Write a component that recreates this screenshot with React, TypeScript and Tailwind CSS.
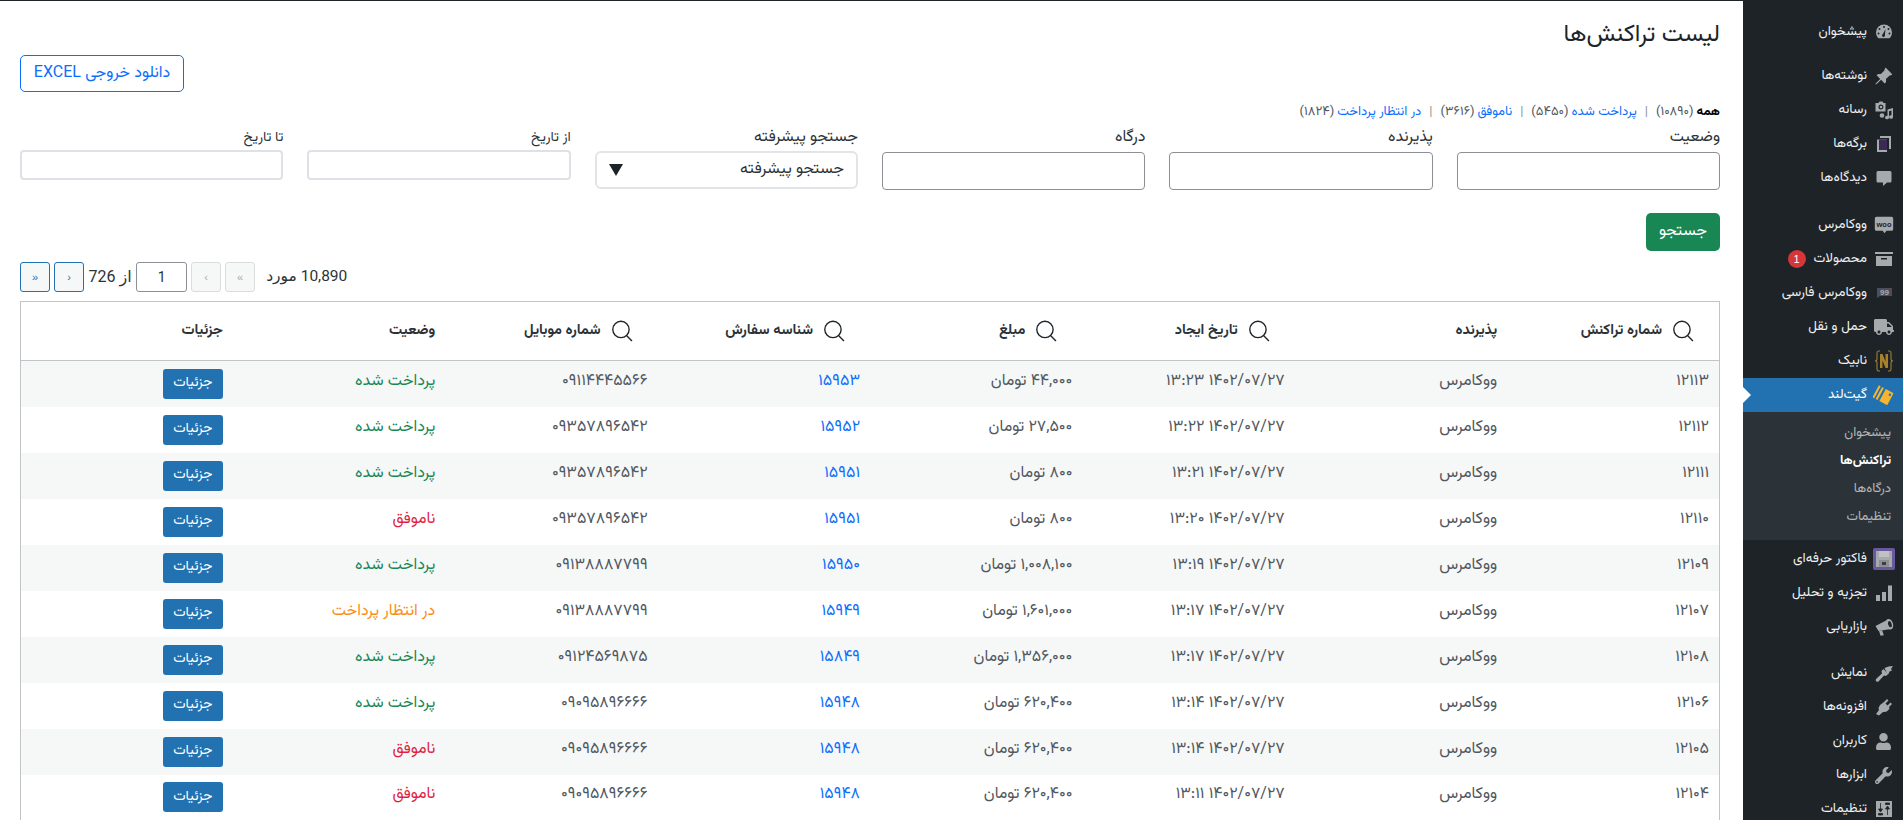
import { BsPinAngleFill } from 'react-icons/bs'
import { FaTruck, FaUser, FaWrench } from 'react-icons/fa'

const font = "font-['Vazirmatn','DejaVu_Sans','Noto_Sans',sans-serif]"

type Status = 'paid' | 'failed' | 'pending'
interface Row { id: string; time: string; amount: string; order: string; mobile: string; status: Status }

const rows: Row[] = [
  { id: '۱۲۱۱۳', time: '۱۳:۲۳', amount: '۴۴,۰۰۰', order: '۱۵۹۵۳', mobile: '۰۹۱۱۴۴۴۵۵۶۶', status: 'paid' },
  { id: '۱۲۱۱۲', time: '۱۳:۲۲', amount: '۲۷,۵۰۰', order: '۱۵۹۵۲', mobile: '۰۹۳۵۷۸۹۶۵۴۲', status: 'paid' },
  { id: '۱۲۱۱۱', time: '۱۳:۲۱', amount: '۸۰۰', order: '۱۵۹۵۱', mobile: '۰۹۳۵۷۸۹۶۵۴۲', status: 'paid' },
  { id: '۱۲۱۱۰', time: '۱۳:۲۰', amount: '۸۰۰', order: '۱۵۹۵۱', mobile: '۰۹۳۵۷۸۹۶۵۴۲', status: 'failed' },
  { id: '۱۲۱۰۹', time: '۱۳:۱۹', amount: '۱,۰۰۸,۱۰۰', order: '۱۵۹۵۰', mobile: '۰۹۱۳۸۸۸۷۷۹۹', status: 'paid' },
  { id: '۱۲۱۰۷', time: '۱۳:۱۷', amount: '۱,۶۰۱,۰۰۰', order: '۱۵۹۴۹', mobile: '۰۹۱۳۸۸۸۷۷۹۹', status: 'pending' },
  { id: '۱۲۱۰۸', time: '۱۳:۱۷', amount: '۱,۳۵۶,۰۰۰', order: '۱۵۸۴۹', mobile: '۰۹۱۲۴۵۶۹۸۷۵', status: 'paid' },
  { id: '۱۲۱۰۶', time: '۱۳:۱۴', amount: '۶۲۰,۴۰۰', order: '۱۵۹۴۸', mobile: '۰۹۰۹۵۸۹۶۶۶۶', status: 'paid' },
  { id: '۱۲۱۰۵', time: '۱۳:۱۴', amount: '۶۲۰,۴۰۰', order: '۱۵۹۴۸', mobile: '۰۹۰۹۵۸۹۶۶۶۶', status: 'failed' },
  { id: '۱۲۱۰۴', time: '۱۳:۱۱', amount: '۶۲۰,۴۰۰', order: '۱۵۹۴۸', mobile: '۰۹۰۹۵۸۹۶۶۶۶', status: 'failed' },
]

const statusLabel: Record<Status, string> = { paid: 'پرداخت شده', failed: 'ناموفق', pending: 'در انتظار پرداخت' }
const statusClass: Record<Status, string> = { paid: 'text-[#198754]', failed: 'text-[#e01e42]', pending: 'text-[#fd8c14]' }

const columns = [
  { title: 'شماره تراکنش', search: true },
  { title: 'پذیرنده', search: false },
  { title: 'تاریخ ایجاد', search: true },
  { title: 'مبلغ', search: true },
  { title: 'شناسه سفارش', search: true },
  { title: 'شماره موبایل', search: true },
  { title: 'وضعیت', search: false },
  { title: 'جزئیات', search: false },
]

function SearchIcon() {
  return (
    <svg viewBox="0 0 21 21" className="w-[22px] h-[22px] shrink-0" fill="none" stroke="#1d2327" strokeWidth="1.3">
      <circle cx="9.5" cy="9" r="7.8" />
      <path d="M15 15l5 5" />
    </svg>
  )
}

const I = ({ children }: { children: React.ReactNode }) => (
  <svg viewBox="0 0 20 20" className="w-5 h-5" fill="#a7aaad">{children}</svg>
)

const icons = {
  dashboard: (
    <I>
      <path fillRule="evenodd" d="M10 2.5a8 8 0 0 1 8 8c0 2.4-1 4.4-2.6 5.8H4.6C3 14.9 2 12.9 2 10.5a8 8 0 0 1 8-8zM10 4a1 1 0 1 0 0 2 1 1 0 0 0 0-2zM5.5 6a1 1 0 1 0 0 2 1 1 0 0 0 0-2zM14.5 6a1 1 0 1 0 0 2 1 1 0 0 0 0-2zM4.5 10.5a1 1 0 1 0 0 2 1 1 0 0 0 0-2zM15.5 10.5a1 1 0 1 0 0 2 1 1 0 0 0 0-2zM11.5 7l-2.6 5a1.5 1.5 0 1 0 2 .8z" />
    </I>
  ),
  media: (
    <I>
      <path fillRule="evenodd" d="M1.5 3h3l1-1.5h3l1 1.5h2v8.5H1.5zM7 4.5a2.5 2.5 0 1 0 0 5 2.5 2.5 0 0 0 0-5z" />
      <circle cx="7" cy="7" r="1.3" />
      <path d="M13.5 9.5l5.5-1.5v9a2 1.8 0 1 1-1.5-1.7V10.5l-2.5.7v6.3a2 1.8 0 1 1-1.5-1.7z" />
      <circle cx="8" cy="15.5" r="2.3" />
    </I>
  ),
  pages: (
    <I>
      <path d="M6 2h11v13h-2V4H6z" />
      <path d="M3 5.5h10V18H3z" />
      <path d="M5 5.5h8V16H5z" fill="#3b2a55" />
    </I>
  ),
  comments: <I><path d="M4 3h12a1.5 1.5 0 0 1 1.5 1.5v8.5A1.5 1.5 0 0 1 16 14.5h-3l-4 3.5v-3.5H4A1.5 1.5 0 0 1 2.5 13V4.5A1.5 1.5 0 0 1 4 3z" /></I>,
  woo: (
    <svg viewBox="0 0 24 24" className="w-[20px] h-[20px]">
      <path d="M3 2h18a2 2 0 0 1 2 2v13a2 2 0 0 1-2 2h-6l-2.5 3-2-3H3a2 2 0 0 1-2-2V4a2 2 0 0 1 2-2z" fill="#a7aaad" />
      <text x="12" y="14" textAnchor="middle" fontSize="9" fontWeight="700" fill="#1d2327" fontFamily="Liberation Sans, sans-serif">woo</text>
    </svg>
  ),
  archive: (
    <I>
      <path d="M1 3h18v2H1z" />
      <path fillRule="evenodd" d="M2 7h16v10H2zM7 9v1.5h6V9z" />
    </I>
  ),
  persian: (
    <svg viewBox="0 0 20 20" className="w-5 h-5">
      <path d="M3 5h15v8H6l-3 2z" fill="#4b4f5c" />
      <text x="10.5" y="12" textAnchor="middle" fontSize="8" fontWeight="700" fill="#a7aaad" fontFamily="Liberation Sans, sans-serif">99</text>
    </svg>
  ),
  nabik: (
    <svg viewBox="0 0 20 24" className="w-[20px] h-[24px]" fill="none">
      <path d="M6 2H4.5Q3 2 3 4v6q0 2-2 2 2 0 2 2v6q0 2 1.5 2H6M14 2h1.5Q17 2 17 4v6q0 2 2 2-2 0-2 2v6q0 2-1.5 2H14" stroke="#9c7f3c" strokeWidth="1.1" />
      <path d="M6 5h2.5l3 7.5V5H14v14h-2.5l-3-7.5V19H6z" fill="#a6802a" />
    </svg>
  ),
  gateland: (
    <svg viewBox="0 0 20 20" className="w-[21px] h-[21px]">
      <g transform="rotate(28 10 10)">
        <rect x="1.5" y="3.5" width="2" height="13" rx=".5" fill="#f5b531" />
        <rect x="5" y="3.5" width="2" height="13" rx=".5" fill="#f5b531" />
        <path d="M9 3.5h7.5a1 1 0 0 1 1 1v11a1 1 0 0 1-1 1H9z" fill="#f5b531" />
        <rect x="14" y="5.5" width="2" height="2" fill="#2271b1" />
      </g>
    </svg>
  ),
  factor: (
    <svg viewBox="0 0 22 22" className="w-[22px] h-[22px]">
      <rect width="22" height="22" rx="2" fill="#6a5a9d" />
      <path d="M3 3h16v16H3z" fill="#a7aaad" />
      <path d="M6 3h10v6H6z" fill="#bfc1c4" />
      <path d="M6 12h10v7H6z" fill="#8d8f92" />
      <rect x="9" y="14" width="4" height="3" fill="#3b3f44" />
    </svg>
  ),
  analytics: (
    <I>
      <path d="M2 12h4v6H2zM8 9h4v9H8zM14 2.5h4V18h-4z" />
    </I>
  ),
  megaphone: (
    <I>
      <path d="M1.5 9l12.5-6.5 3 9.5-12.5 2z" />
      <ellipse cx="15.5" cy="7.2" rx="3.5" ry="5.4" transform="rotate(-17 15.5 7.2)" />
      <ellipse cx="15.9" cy="7.2" rx="1.7" ry="3.2" transform="rotate(-17 15.9 7.2)" fill="#1d2327" />
      <path d="M5 14l3.2-.5 1.6 4.8-3.2.5z" />
    </I>
  ),
  brush: (
    <I>
      <path d="M10.5 5l4-1.5 4.5-.5-2 3 1 1.5-2.5 1-1 2.5-1 .5z" />
      <path d="M9.5 6l4.5 5-2 2-2-.5-5.5 6A1.8 1.8 0 0 1 2 16l6-5.5-.5-2.5z" />
    </I>
  ),
  plugin: (
    <I>
      <path d="M13 2l1.5 1.5-3 3 2 2 3-3L18 7l-3 3 .5 1.5-1.5 2q-2.5 2-5 1.5L5 18.5 2 17l3-4q-1-2.5 1-5l2-1.5L10 5z" />
    </I>
  ),
  settings: (
    <svg viewBox="0 0 20 20" className="w-5 h-5">
      <rect x="2" y="2" width="16" height="16" fill="#a7aaad" />
      <path d="M6.5 4v8M4.5 10l2 3 2-3zM13.5 16V8M11.5 10l2-3 2 3zM4.5 14.5h4v1.5h-4zM11.5 4h4v1.5h-4z" fill="#1d2327" stroke="#1d2327" strokeWidth=".8" />
    </svg>
  ),
}

function MenuItem({ label, icon, badge, className = '' }: { label: string; icon: React.ReactNode; badge?: string; className?: string }) {
  return (
    <div className={`h-[34px] flex items-center text-[13.5px] text-[#f0f0f1] ${className}`}>
      <span className="w-[36px] shrink-0 flex justify-center pr-[3px]">{icon}</span>
      <span className="whitespace-nowrap">{label}</span>
      {badge && (
        <span className="mr-[8px] w-[18px] h-[18px] rounded-full bg-[#d63638] text-white text-[11px] flex items-center justify-center font-['Liberation_Sans',sans-serif]">{badge}</span>
      )}
    </div>
  )
}

function Sidebar() {
  return (
    <aside className="w-[160px] shrink-0 bg-[#1d2327] pt-[14px]">
      <MenuItem label="پیشخوان" icon={icons.dashboard} />
      <MenuItem label="نوشته‌ها" className="mt-[10px]" icon={<BsPinAngleFill size={19} color="#a7aaad" />} />
      <MenuItem label="رسانه" icon={icons.media} />
      <MenuItem label="برگه‌ها" icon={icons.pages} />
      <MenuItem label="دیدگاه‌ها" icon={icons.comments} />
      <MenuItem label="ووکامرس" className="mt-[13px]" icon={icons.woo} />
      <MenuItem label="محصولات" badge="1" icon={icons.archive} />
      <MenuItem label="ووکامرس فارسی" icon={icons.persian} />
      <MenuItem label="حمل و نقل" icon={<FaTruck size={20} color="#a7aaad" />} />
      <MenuItem label="نابیک" icon={icons.nabik} />
      <div className="relative bg-[#2271b1]">
        <MenuItem label="گیت‌لند" className="!text-white" icon={icons.gateland} />
        <span className="absolute left-0 top-[9px] w-0 h-0 border-y-[8px] border-y-transparent border-l-[8px] border-l-white" />
      </div>
      <div className="bg-[#2c3338] py-[8px] pr-[12px] text-[13px] text-[#f0f0f1]/70">
        <div className="h-[28px] flex items-center">پیشخوان</div>
        <div className="h-[28px] flex items-center font-bold text-white">تراکنش‌ها</div>
        <div className="h-[28px] flex items-center">درگاه‌ها</div>
        <div className="h-[28px] flex items-center">تنظیمات</div>
      </div>
      <MenuItem label="فاکتور حرفه‌ای" className="mt-[2px]" icon={icons.factor} />
      <MenuItem label="تجزیه و تحلیل" icon={icons.analytics} />
      <MenuItem label="بازاریابی" icon={icons.megaphone} />
      <MenuItem label="نمایش" className="mt-[12px]" icon={icons.brush} />
      <MenuItem label="افزونه‌ها" icon={icons.plugin} />
      <MenuItem label="کاربران" icon={<FaUser size={17} color="#a7aaad" />} />
      <MenuItem label="ابزارها" icon={<FaWrench size={17} color="#a7aaad" />} />
      <MenuItem label="تنظیمات" icon={icons.settings} />
    </aside>
  )
}

function BigField({ label }: { label: string }) {
  return (
    <label className="block">
      <span className="block text-[16px] leading-[20px] h-[24px] text-[#2c3338]">{label}</span>
      <input className="block w-full h-[38px] bg-white border border-[#8c8f94] rounded-[4px]" />
    </label>
  )
}

function DateField({ label }: { label: string }) {
  return (
    <label className="block">
      <span className="block text-[14px] leading-[20px] h-[22px] text-[#2c3338]">{label}</span>
      <input className="block w-full h-[30px] bg-white border-2 border-[#dee2e6] rounded-[4px]" />
    </label>
  )
}

function PagerButton({ glyph, disabled }: { glyph: string; disabled?: boolean }) {
  return (
    <button className={`w-[30px] h-[30px] rounded-[3px] border bg-[#f6f7f7] text-[11px] leading-none font-['Liberation_Sans',sans-serif] ${disabled ? 'border-[#dcdcde] text-[#a7aaad]' : 'border-[#2271b1] text-[#2271b1]'}`}>
      {glyph}
    </button>
  )
}

function Tabs() {
  const tabs = [
    ['پرداخت شده', '(۵۴۵۰)'],
    ['ناموفق', '(۳۶۱۶)'],
    ['در انتظار پرداخت', '(۱۸۲۴)'],
  ]
  return (
    <div className="mt-[10px] h-[20px] flex items-center text-[13px] leading-[20px] text-[#50575e]">
      <span className="font-bold text-black">همه</span>
      <span className="mr-[3px]">(۱۰۸۹۰)</span>
      {tabs.map(([name, count]) => (
        <span key={name} className="flex items-center">
          <span className="mx-[8px] text-[#8c8f94]">|</span>
          <span className="text-[#0d6efd]">{name}</span>
          <span className="mr-[3px]">{count}</span>
        </span>
      ))}
    </div>
  )
}

function Table() {
  return (
    <table className="mt-[9px] w-full table-fixed border-collapse border border-[#c3c4c7] text-[16px] text-[#50575e]">
      <thead>
        <tr className="h-[59px] border-b border-[#c3c4c7]">
          {columns.map((c) => (
            <th key={c.title} className="px-[10px] text-right font-bold text-[14.5px] text-[#2c3338]">
              <span className={`flex items-center gap-[10px] ${c.search ? 'pr-[15px]' : ''}`}>
                {c.search && <SearchIcon />}
                {c.title}
              </span>
            </th>
          ))}
        </tr>
      </thead>
      <tbody>
        {rows.map((r, i) => (
          <tr key={i} className={`h-[46px] ${i % 2 === 0 ? 'bg-[#f6f7f7]' : 'bg-white'}`}>
            <td className="px-[10px] pb-[4px]">{r.id}</td>
            <td className="px-[10px] pb-[4px]">ووکامرس</td>
            <td className="px-[10px] pb-[4px] whitespace-nowrap"><span dir="ltr">{r.time} ۱۴۰۲/۰۷/۲۷</span></td>
            <td className="px-[10px] pb-[4px]">{r.amount} تومان</td>
            <td className="px-[10px] pb-[4px] text-[#0d6efd]">{r.order}</td>
            <td className="px-[10px] pb-[4px]">{r.mobile}</td>
            <td className={`px-[10px] pb-[4px] ${statusClass[r.status]}`}>{statusLabel[r.status]}</td>
            <td className="px-[10px]">
              <button className="block w-[60px] h-[30px] rounded-[3px] bg-[#2271b1] text-white text-[14px]">جزئیات</button>
            </td>
          </tr>
        ))}
      </tbody>
    </table>
  )
}

export default function App() {
  return (
    <div dir="rtl" className={`h-[820px] overflow-hidden flex bg-white border-t border-[#1d2327] ${font}`}>
      <Sidebar />
      <main className="flex-1 min-w-0 pr-[23px] pl-[20px]">
        <h1 className="mt-[16px] h-[36px] text-[24px] leading-[36px] font-normal text-[#1d2327]">لیست تراکنش‌ها</h1>
        <div className="mt-[2px] flex justify-end">
          <button className="w-[164px] h-[37px] rounded-[5px] border border-[#0d6efd] bg-white text-[#0d6efd] text-[16px]">
            دانلود خروجی EXCEL
          </button>
        </div>
        <Tabs />
        <div className="mt-[6px] grid grid-cols-6 gap-x-[24px] items-start">
          <BigField label="وضعیت" />
          <BigField label="پذیرنده" />
          <BigField label="درگاه" />
          <label className="block">
            <span className="block text-[16px] leading-[20px] h-[23px] text-[#2c3338]">جستجو پیشرفته</span>
            <span className="h-[38px] bg-white border-2 border-[#e2e4e8] rounded-[6px] flex items-center justify-between px-[12px] text-[16px] text-[#2c3338]">
              جستجو پیشرفته
              <span className="w-0 h-0 border-x-[7px] border-x-transparent border-t-[12px] border-t-[#1d2327]" />
            </span>
          </label>
          <DateField label="از تاریخ" />
          <DateField label="تا تاریخ" />
        </div>
        <div className="mt-[23px]">
          <button className="w-[74px] h-[38px] rounded-[5px] bg-[#198754] text-white text-[16px]">جستجو</button>
        </div>
        <div className="mt-[11px] flex justify-end items-center h-[30px] text-[14px] text-[#2c3338]">
          <span className="ml-[11px] font-['Roboto','DejaVu_Sans',sans-serif] text-[15.5px]">10,890 مورد</span>
          <div className="flex items-center gap-[4px]">
            <PagerButton glyph="»" disabled />
            <PagerButton glyph="›" disabled />
            <input defaultValue="1" className="w-[51px] h-[30px] mx-0 text-center text-[14px] border border-[#8c8f94] rounded-[3px] bg-white font-['Roboto',sans-serif]" />
            <span className="mx-[0.5px] font-['Roboto','DejaVu_Sans',sans-serif] text-[16px]">از 726</span>
            <PagerButton glyph="‹" />
            <PagerButton glyph="«" />
          </div>
        </div>
        <Table />
      </main>
    </div>
  )
}
